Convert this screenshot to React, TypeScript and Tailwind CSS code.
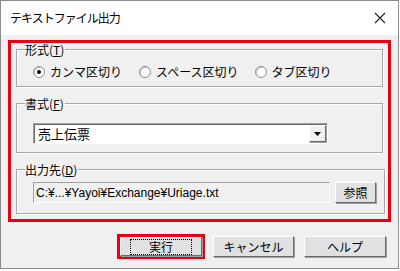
import React from "react";

const jp = { fontFamily: '"Noto Sans CJK JP", "Noto Sans", sans-serif' };

const Radio: React.FC<{ checked?: boolean; label: string }> = ({ checked, label }) => (
  <label className="flex items-center gap-[5px]">
    <span className="w-[12px] h-[12px] rounded-full bg-white border border-[#8d8d8d] flex items-center justify-center shadow-[inset_1px_1px_0_#c8c8c8]">
      {checked && <span className="w-[4px] h-[4px] rounded-full bg-black" />}
    </span>
    <span>{label}</span>
  </label>
);

const Group: React.FC<{ title: string; mnemonic: string; className?: string; children: React.ReactNode }> = ({
  title,
  mnemonic,
  className,
  children,
}) => (
  <fieldset className={"border border-[#a8a8a8] shadow-[1px_1px_0_#ffffff,inset_1px_1px_0_#ffffff] px-[8px] " + (className ?? "")}>
    <legend className="ml-0 pl-0 pr-[1px] leading-[13px]">
      {title}(<span className="underline">{mnemonic}</span>)
    </legend>
    {children}
  </fieldset>
);

const Button: React.FC<{ label: string; focused?: boolean; className?: string }> = ({ label, focused, className }) => (
  <button
    className={
      "bg-[#e1e1e1] border border-t-white border-l-white border-r-[#6b6b6b] border-b-[#6b6b6b] shadow-[1px_1px_0_#a0a0a0] flex items-center justify-center " +
      (className ?? "")
    }
  >
    <span className={focused ? "border border-dotted border-black px-[18px] leading-[14px]" : "leading-[15px]"}>{label}</span>
  </button>
);

export default function App() {
  return (
    <div className="w-[400px] h-[271px] bg-white">
      <div className="w-[399px] h-[269px] border border-[#8c8c8c] bg-[#f0f0f0] flex flex-col text-[12px] text-black" style={jp}>
        <div className="h-[34px] bg-white flex items-center justify-between pl-[9px] pr-[12px]">
          <span className="text-[12px] tracking-[-1px]">テキストファイル出力</span>
          <svg width="12" height="12" viewBox="0 0 12 12">
            <path d="M1 1 L11 11 M11 1 L1 11" stroke="#222" strokeWidth="1.1" />
          </svg>
        </div>

        <div className="mt-[5px] mx-[7px] border-[3px] border-[#e60012] px-[5px] pb-[5px] flex flex-col gap-[10px]">
          <Group title="形式" mnemonic="T" className="pb-[7px]">
            <div className="flex items-center pt-[9px] pl-[8px] leading-[14px]">
              <Radio checked label="カンマ区切り" />
              <div className="w-[17px]" />
              <Radio label="スペース区切り" />
              <div className="w-[16px]" />
              <Radio label="タブ区切り" />
            </div>
          </Group>

          <Group title="書式" mnemonic="F" className="pb-[8px]">
            <div className="flex pt-[13px] pl-[8px]">
              <div className="w-[295px] h-[21px] bg-white border border-t-[#a0a0a0] border-l-[#a0a0a0] border-r-white border-b-white shadow-[inset_1px_1px_0_#696969] flex items-center justify-between">
                <span className="pl-[4px] text-[13px] leading-[15px]">売上伝票</span>
                <span className="w-[17px] h-[17px] mr-[1px] bg-[#f0f0f0] border border-t-white border-l-white border-r-[#696969] border-b-[#696969] shadow-[1px_1px_0_#a0a0a0] flex items-center justify-center">
                  <svg width="7" height="4" viewBox="0 0 7 4">
                    <path d="M0 0 H7 L3.5 4 Z" fill="#000" />
                  </svg>
                </span>
              </div>
            </div>
          </Group>

          <Group title="出力先" mnemonic="D" className="pb-[10px]">
            <div className="flex items-center pt-[6px] pl-[8px] gap-[5px]">
              <div
                className="w-[297px] h-[21px] bg-[#f0f0f0] border border-t-[#a0a0a0] border-l-[#a0a0a0] border-r-white border-b-white flex items-center pl-[2px] text-[12px]"
                style={{ fontFamily: '"Liberation Sans", "Noto Sans CJK JP", sans-serif' }}
              >
                C:¥...¥Yayoi¥Exchange¥Uriage.txt
              </div>
              <Button label="参照" className="w-[41px] h-[21px]" />
            </div>
          </Group>
        </div>

        <div className="flex items-center justify-end pr-[12px] pt-[12px]">
          <div className="border-[3px] border-[#e60012]">
            <Button label="実行" focused className="w-[82px] h-[19px]" />
          </div>
          <Button label="キャンセル" className="w-[81px] h-[21px] ml-[8px]" />
          <Button label="ヘルプ" className="w-[82px] h-[21px] ml-[10px]" />
        </div>
      </div>
    </div>
  );
}
